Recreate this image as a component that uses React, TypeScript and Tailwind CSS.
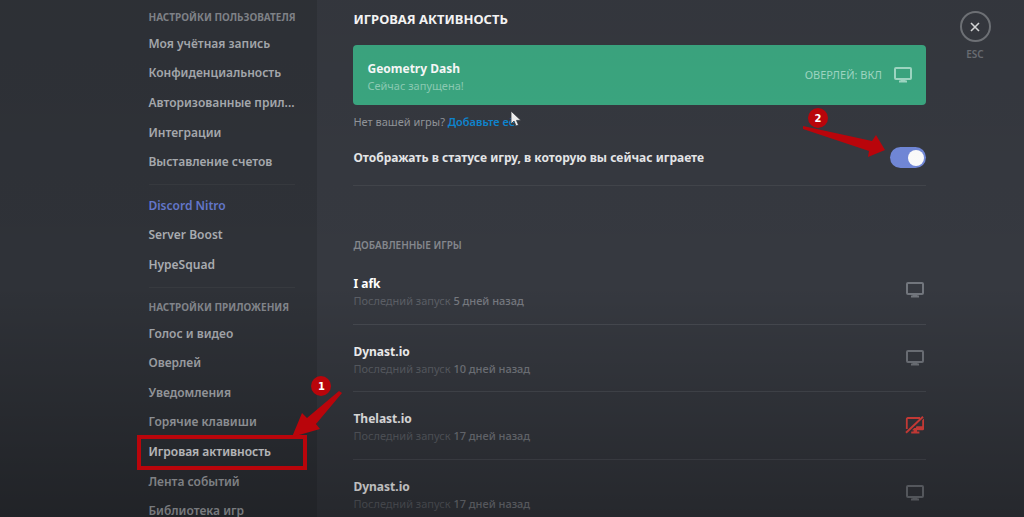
import { useState } from "react";
import clsx from "clsx";

const userItems = [
  "Моя учётная запись",
  "Конфиденциальность",
  "Авторизованные прил...",
  "Интеграции",
  "Выставление счетов",
];

const nitroItems = ["Discord Nitro", "Server Boost", "HypeSquad"];

const appItems = [
  "Голос и видео",
  "Оверлей",
  "Уведомления",
  "Горячие клавиши",
  "Игровая активность",
  "Лента событий",
  "Библиотека игр",
];

const games = [
  { id: 1, name: "I afk", played: "5 дней назад", overlay: true },
  { id: 2, name: "Dynast.io", played: "10 дней назад", overlay: true },
  { id: 3, name: "Thelast.io", played: "17 дней назад", overlay: false },
  { id: 4, name: "Dynast.io", played: "17 дней назад", overlay: true },
];

function MonitorIcon() {
  return (
    <svg width="18" height="16" viewBox="0 0 18 16" fill="none">
      <rect x="1" y="1" width="16" height="11" rx="1" stroke="currentColor" strokeWidth="2" />
      <path d="M7 12h4l.6 1.6H13v2H5v-2h1.4z" fill="currentColor" />
    </svg>
  );
}

function MonitorOffIcon() {
  return (
    <svg width="20" height="18" viewBox="0 0 20 18" fill="none">
      <path d="M15 2H2.8a1 1 0 0 0-1 1v10" stroke="currentColor" strokeWidth="1.8" />
      <path d="M1 16.8 18 .8" stroke="currentColor" strokeWidth="2" />
      <path
        d="M17.2 4.2 19 2.6V13a1.2 1.2 0 0 1-1.2 1.2H12v1.4h2.4v1.8H6.2v-1.8h2.4v-1.4H7l2.2-2.1h1.5l.8-1.8h5.7z"
        fill="currentColor"
      />
    </svg>
  );
}

function StepBadge({ step, className }: { step: number; className?: string }) {
  return (
    <span
      className={clsx(
        "absolute z-20 flex size-5 items-center justify-center rounded-full bg-[#b9050b] font-['DejaVu_Sans',sans-serif] text-[10px] font-bold text-white",
        className
      )}
    >
      {step}
    </span>
  );
}

function NavGroup({
  items,
  active,
  className,
}: {
  items: string[];
  active?: string;
  className?: string;
}) {
  return (
    <ul className={clsx("grid auto-rows-fr", className)}>
      {items.map((item) => (
        <li key={item} className="relative flex min-w-0 items-center pt-0.5">
          <a
            href="#"
            className={clsx(
              "w-full pl-[11px] text-xs leading-5 font-semibold whitespace-nowrap",
              item === active
                ? "text-[#e6e7ea]"
                : item === "Discord Nitro"
                  ? "text-[#6478cc]"
                  : "text-[#a9acb1]"
            )}
          >
            {item}
          </a>
          {item === active && (
            <>
              <span className="pointer-events-none absolute inset-x-0 -top-px -bottom-1 z-20 border-4 border-[#b9050b]" />
              <StepBadge step={1} className="-top-[60px] -right-6" />
              <svg
                className="pointer-events-none absolute -top-[46px] -right-9 z-20"
                width="52"
                height="48"
                viewBox="0 0 52 48"
              >
                <path d="M48 1 51 3 25 34 29 39 1 47 11 23 16 28z" fill="#b9050b" />
              </svg>
            </>
          )}
        </li>
      ))}
    </ul>
  );
}

function NavHeading({ children }: { children: string }) {
  return (
    <h2 className="h-[22px] pl-[11px] text-[10px] leading-[22px] font-bold whitespace-nowrap text-[#84878d] uppercase">
      {children}
    </h2>
  );
}

export default function App() {
  const [showStatus, setShowStatus] = useState(true);

  return (
    <div className="relative flex h-screen overflow-hidden bg-[#363940] font-['Noto_Sans',sans-serif] text-white">
      <aside className="flex w-[31%] shrink-0 justify-end bg-[#2f3238] pr-2.5">
        <nav className="w-[170px] pt-1.5">
          <NavHeading>Настройки пользователя</NavHeading>
          <NavGroup items={userItems} className="h-[148px]" />
          <hr className="mx-3 mt-2 mb-[5px] border-[#373a3f]" />
          <NavGroup items={nitroItems} className="h-[89px]" />
          <hr className="mx-3 my-2 border-[#373a3f]" />
          <NavHeading>Настройки приложения</NavHeading>
          <NavGroup items={appItems} active="Игровая активность" className="h-[207px]" />
        </nav>
      </aside>

      <main className="min-w-0 flex-1 pt-2 pl-9">
        <h1 className="text-[13px] leading-[22px] font-bold uppercase">Игровая активность</h1>

        <section className="mt-[15px] flex h-[60px] items-center justify-between rounded-sm bg-[#3ca982] px-3.5">
          <div className="pt-1">
            <h2 className="text-xs leading-[18px] font-bold">Geometry Dash</h2>
            <p className="text-[11px] leading-4 text-[#8fd0b8]">Сейчас запущена!</p>
          </div>
          <button type="button" className="flex items-center gap-3 text-[11px] text-[#a2dcc7]">
            ОВЕРЛЕЙ: ВКЛ
            <MonitorIcon />
          </button>
        </section>

        <p className="mt-2 text-[11px] leading-[18px] text-[#94979c]">
          Нет вашей игры?{" "}
          <a href="#" className="relative font-semibold text-[#0e87d2]">
            Добавьте её!
            <svg
              className="absolute -top-1 -right-1"
              width="12"
              height="17"
              viewBox="0 0 12 17"
            >
              <path
                d="M1 1v13l3-3 2 5 2.5-1-2-4.6H11z"
                fill="#f4f4f4"
                stroke="#36393f"
                strokeWidth="0.8"
              />
            </svg>
          </a>
        </p>

        <div className="mt-4 flex items-center justify-between">
          <label htmlFor="show-status" className="text-xs leading-5 font-bold text-[#e8e9eb]">
            Отображать в статусе игру, в которую вы сейчас играете
          </label>
          <div className="relative flex">
            <input
              id="show-status"
              type="checkbox"
              checked={showStatus}
              onChange={(e) => setShowStatus(e.target.checked)}
              className="flex h-[21px] w-9 cursor-pointer appearance-none items-center rounded-full bg-[#72767d] px-0.5 before:size-4 before:rounded-full before:bg-white checked:justify-end checked:bg-[#7289da]"
            />
            <StepBadge step={2} className="-top-[39px] right-[98px]" />
            <svg
              className="pointer-events-none absolute -top-[21px] right-[41px] z-20"
              width="82"
              height="32"
              viewBox="0 0 82 32"
            >
              <path d="M0 0 69 15 73 9 82 24 65 31 66 25 0 3z" fill="#b9050b" />
            </svg>
          </div>
        </div>
        <hr className="mt-[17px] border-[#42454b]" />

        <h2 className="mt-[47px] text-[10px] leading-6 font-semibold text-[#85888e] uppercase">
          Добавленные игры
        </h2>

        <ul className="grid h-[270px] auto-rows-fr">
          {games.map((game) => (
            <li
              key={game.id}
              className="flex items-center justify-between border-b border-[#474a51]"
            >
              <div className="pt-1">
                <h3 className="text-xs leading-[18px] font-bold">{game.name}</h3>
                <p className="text-[11px] leading-4 text-[#5d6067]">
                  Последний запуск <span className="font-medium text-[#777a80]">{game.played}</span>
                </p>
              </div>
              <button
                type="button"
                aria-label={game.overlay ? "Отключить оверлей" : "Включить оверлей"}
                className={clsx(
                  "mr-px flex w-5 justify-center",
                  game.overlay ? "text-[#72767d]" : "text-[#ec4540]"
                )}
              >
                {game.overlay ? <MonitorIcon /> : <MonitorOffIcon />}
              </button>
            </li>
          ))}
        </ul>
      </main>

      <div className="flex w-[98px] shrink-0 flex-col items-center pt-[11px]">
        <button
          type="button"
          aria-label="Закрыть"
          className="flex size-[31px] items-center justify-center rounded-full border-2 border-[#72757a] text-[#dcddde]"
        >
          <svg width="10" height="10" viewBox="0 0 10 10">
            <path d="m1 1 8 8M9 1 1 9" stroke="currentColor" strokeWidth="1.6" />
          </svg>
        </button>
        <span className="mt-1 text-[10px] leading-4 font-semibold text-[#6c6f75]">ESC</span>
      </div>

      {/* vignette */}
      <div className="pointer-events-none absolute inset-0 z-10 bg-linear-to-b from-black/5 via-transparent via-55% to-black/30" />
    </div>
  );
}
